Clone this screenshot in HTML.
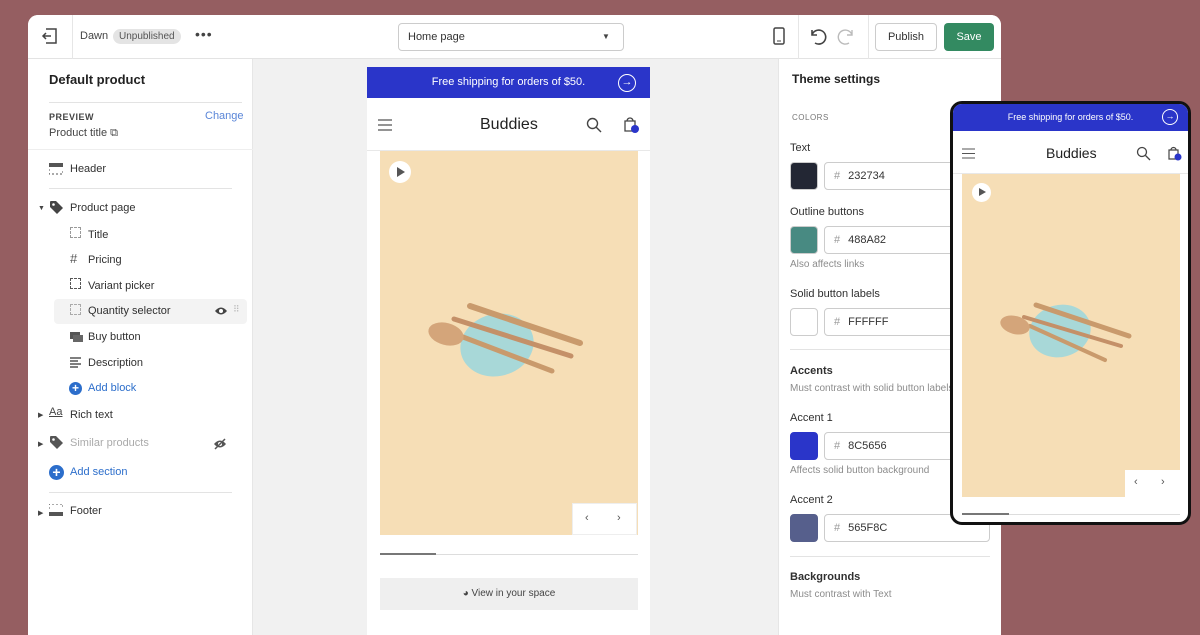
<!DOCTYPE html>
<html><head><meta charset="utf-8"><style>
*{box-sizing:border-box;margin:0;padding:0}
body{width:1200px;height:614px;background:#955e61;font-family:"Liberation Sans",sans-serif;position:relative;overflow:hidden;color:#202223}
.abs{position:absolute}
.app{left:28px;top:15px;width:973px;height:620px;background:#fff;border-radius:10px 10px 0 0;overflow:hidden}
.top{left:0;top:0;width:973px;height:44px;background:#fff;border-bottom:1px solid #e3e3e3;box-shadow:0 1px 3px rgba(0,0,0,.08)}
.t{position:absolute;font-size:11px;white-space:nowrap}
.sm{font-size:11px;color:#303030}
.mid{left:225px;top:44px;width:525px;height:580px;background:#f1f1f1}
.left{left:0;top:44px;width:225px;height:580px;background:#fff;border-right:1px solid #e6e6e6}
.right{left:750px;top:44px;width:223px;height:580px;background:#fff;border-left:1px solid #e6e6e6}
.sw{position:absolute;width:28px;height:28px;border-radius:4px;border:1px solid #ccc}
.inp{position:absolute;height:28px;border:1px solid #ccc;border-radius:4px;font-size:11px;padding:7px 0 0 9px;color:#333;width:180px}
.inp b{font-weight:normal;color:#999;margin-right:8px}
.grey{color:#8c8c8c}
.hr{position:absolute;height:1px;background:#e3e3e3}
</style></head><body>
<div class="abs app">
 <div class="abs top">
  <svg class="abs" style="left:13px;top:12px" width="18" height="18" viewBox="0 0 18 18" fill="none" stroke="#444" stroke-width="1.5"><path d="M5 2h10v14H5M2 9h8M5 6l-3 3 3 3"/></svg>
  <div class="abs" style="left:44px;top:0;width:1px;height:44px;background:#e6e6e6"></div>
  <div class="t" style="left:52px;top:15px;color:#444">Dawn</div>
  <div class="t" style="left:85px;top:14px;background:#e4e4e4;border-radius:8px;padding:2px 6px;font-size:10px;color:#555">Unpublished</div>
  <div class="t" style="left:167px;top:11px;font-size:14px;color:#444;letter-spacing:1px">•••</div>
  <div class="abs" style="left:370px;top:8px;width:226px;height:28px;border:1px solid #ccc;border-radius:4px"><span class="t" style="left:9px;top:7px;color:#333">Home page</span><span class="t" style="left:203px;top:8px;font-size:8px;color:#444">▼</span></div>
  <svg class="abs" style="left:745px;top:12px" width="12" height="18"><rect x="1" y="1" width="10" height="16" rx="1.5" fill="none" stroke="#444" stroke-width="1.5"/><line x1="4" y1="14" x2="8" y2="14" stroke="#444"/></svg>
  <div class="abs" style="left:770px;top:0;width:1px;height:44px;background:#e6e6e6"></div>
  <svg class="abs" style="left:780px;top:12px" width="20" height="18" fill="none" stroke="#444" stroke-width="1.6"><path d="M4 3v5h5M4 8a7 7 0 1 1 3 8"/></svg>
  <svg class="abs" style="left:808px;top:12px" width="20" height="18" fill="none" stroke="#bbb" stroke-width="1.4"><path d="M16 3v5h-5M16 8a7 7 0 1 0-3 8"/></svg>
  <div class="abs" style="left:840px;top:0;width:1px;height:44px;background:#e6e6e6"></div>
  <div class="abs" style="left:847px;top:8px;width:62px;height:28px;border:1px solid #ccc;border-radius:4px;font-size:11px;text-align:center;line-height:26px;color:#333">Publish</div>
  <div class="abs" style="left:916px;top:8px;width:50px;height:28px;background:#338a61;border-radius:4px;font-size:11px;text-align:center;line-height:28px;color:#fff">Save</div>
 </div>
 <div class="abs left">
  <div class="t" style="left:21px;top:13px;font-size:13px;font-weight:bold;color:#222">Default product</div>
  <div class="hr" style="left:21px;top:43px;width:193px"></div>
  <div class="t" style="left:21px;top:53px;font-size:9px;font-weight:bold;color:#444;letter-spacing:.5px">PREVIEW</div>
  <div class="t" style="left:177px;top:51px;color:#5a86d8">Change</div>
  <div class="t sm" style="left:21px;top:68px;color:#444">Product title ⧉</div>
  <div class="hr" style="left:0;top:90px;width:225px;background:#eee"></div>
  <svg class="abs" style="left:21px;top:104px" width="14" height="12"><rect x="0" y="0" width="14" height="4" fill="#555"/><path d="M0 6v5h14V6" fill="none" stroke="#555" stroke-dasharray="2 2"/></svg>
  <div class="t sm" style="left:42px;top:104px">Header</div>
  <div class="hr" style="left:21px;top:129px;width:183px"></div>
  <div class="t" style="left:10px;top:146px;font-size:7px;color:#444">▼</div>
  <svg class="abs" style="left:21px;top:141px" width="15" height="15"><path d="M1 7V2a1 1 0 0 1 1-1h5l7 7-6 6z" fill="#444"/><circle cx="4.5" cy="4.5" r="1.3" fill="#fff"/></svg>
  <div class="t sm" style="left:42px;top:143px">Product page</div>
  <div class="t sm" style="left:60px;top:170px">Title</div>
  <div class="t" style="left:42px;top:168px;width:11px;height:11px;border:1.5px dashed #999"></div>
  <div class="t" style="left:42px;top:192px;font-size:13px;color:#555">#</div>
  <div class="t sm" style="left:60px;top:195px">Pricing</div>
  <div class="t" style="left:42px;top:219px;width:11px;height:11px;border:1.5px dashed #555"></div>
  <div class="t sm" style="left:60px;top:221px">Variant picker</div>
  <div class="abs" style="left:26px;top:240px;width:193px;height:25px;background:#f3f3f3;border-radius:4px"></div>
  <div class="t" style="left:42px;top:245px;width:11px;height:11px;border:1.5px dashed #aaa"></div>
  <div class="t sm" style="left:60px;top:246px">Quantity selector</div>
  <svg class="abs" style="left:186px;top:247px" width="14" height="10"><path d="M1 5Q7-2 13 5Q7 12 1 5z" fill="#444"/><circle cx="7" cy="5" r="2" fill="#fff"/></svg>
  <div class="t" style="left:205px;top:245px;font-size:9px;color:#bbb">⠿</div>
  <svg class="abs" style="left:42px;top:273px" width="13" height="10"><rect x="0" y="0" width="10" height="7" fill="#555"/><rect x="3" y="3" width="10" height="7" fill="#666"/></svg>
  <div class="t sm" style="left:60px;top:272px">Buy button</div>
  <svg class="abs" style="left:42px;top:298px" width="11" height="11" stroke="#555" stroke-width="1.5"><path d="M0 1h11M0 4h8M0 7h11M0 10h8"/></svg>
  <div class="t sm" style="left:60px;top:298px">Description</div>
  <div class="abs" style="left:41px;top:323px;width:13px;height:13px;border-radius:50%;background:#2c6ecb;color:#fff;font-size:12px;line-height:13px;text-align:center;font-weight:bold">+</div>
  <div class="t sm" style="left:60px;top:323px;color:#2c6ecb">Add block</div>
  <div class="t" style="left:10px;top:352px;font-size:7px;color:#444">▶</div>
  <div class="t" style="left:21px;top:347px;font-size:11px;color:#444;text-decoration:underline">Aa</div>
  <div class="t sm" style="left:42px;top:350px">Rich text</div>
  <div class="t" style="left:10px;top:381px;font-size:7px;color:#444">▶</div>
  <svg class="abs" style="left:21px;top:376px" width="15" height="15"><path d="M1 7V2a1 1 0 0 1 1-1h5l7 7-6 6z" fill="#555"/><circle cx="4.5" cy="4.5" r="1.3" fill="#fff"/></svg>
  <div class="t sm" style="left:42px;top:378px;color:#aaa">Similar products</div>
  <svg class="abs" style="left:185px;top:379px" width="14" height="12"><path d="M1 6Q7-1 13 6Q7 13 1 6z" fill="#555"/><circle cx="7" cy="6" r="2" fill="#fff"/><line x1="2" y1="11" x2="12" y2="1" stroke="#555" stroke-width="1.5"/></svg>
  <div class="abs" style="left:21px;top:406px;width:15px;height:15px;border-radius:50%;background:#2c6ecb;color:#fff;font-size:14px;line-height:15px;text-align:center;font-weight:bold">+</div>
  <div class="t sm" style="left:42px;top:407px;color:#2c6ecb">Add section</div>
  <div class="hr" style="left:21px;top:433px;width:183px"></div>
  <div class="t" style="left:10px;top:450px;font-size:7px;color:#444">▶</div>
  <svg class="abs" style="left:21px;top:445px" width="14" height="12"><path d="M0 5V0h14v5" fill="none" stroke="#555" stroke-dasharray="2 2"/><rect x="0" y="8" width="14" height="4" fill="#555"/></svg>
  <div class="t sm" style="left:42px;top:446px">Footer</div>
 </div>
 <div class="abs mid">
  <div class="abs" style="left:114px;top:8px;width:283px;height:580px;background:#fff"></div>
  <div class="abs" style="left:114px;top:8px;width:283px;height:31px;background:#2a35c9;color:#fff;font-size:11px;text-align:center;line-height:31px">Free shipping for orders of $50.</div>
  <div class="abs" style="left:365px;top:15px;width:18px;height:18px;border:1.3px solid #fff;border-radius:50%;color:#fff;font-size:11px;line-height:15px;text-align:center">→</div>
  <svg class="abs" style="left:125px;top:60px" width="14" height="12" stroke="#555" stroke-width="1.2"><path d="M0 1h14M0 6h14M0 11h14"/></svg>
  <div class="t" style="left:227px;top:57px;font-size:16px;color:#222">Buddies</div>
  <svg class="abs" style="left:333px;top:58px" width="16" height="16" fill="none" stroke="#444" stroke-width="1.4"><circle cx="6.5" cy="6.5" r="5"/><path d="M10 10l5 5"/></svg>
  <svg class="abs" style="left:370px;top:56px" width="16" height="18" fill="none" stroke="#444" stroke-width="1.3"><path d="M2 6h10v10H2zM4 6a3 3 0 0 1 6 0"/><circle cx="12" cy="14" r="4" fill="#2a35c9" stroke="none"/></svg>
  <div class="abs" style="left:114px;top:91px;width:283px;height:1px;background:#e8e8e8"></div>
  <div class="abs" style="left:127px;top:92px;width:258px;height:384px;background:#f6deb6"></div>
  <svg class="abs" style="left:127px;top:92px" width="258" height="384">
   <ellipse cx="117" cy="194" rx="37" ry="31" fill="#a8d8d8" transform="rotate(-15 117 194)"/>
   <g stroke-linecap="round" fill="none">
    <path d="M90 155L200 192" stroke="#c99a6c" stroke-width="6"/>
    <path d="M74 168L191 205" stroke="#c49068" stroke-width="5"/>
    <path d="M83 186L172 220" stroke="#c99a6c" stroke-width="5"/>
   </g>
   <ellipse cx="66" cy="183" rx="18" ry="11" fill="#d4a57a" transform="rotate(15 66 183)"/>
  </svg>
  <div class="abs" style="left:136px;top:102px;width:22px;height:22px;border-radius:50%;background:#fff"></div>
  <div class="abs" style="left:144px;top:108px;border-left:8px solid #555;border-top:5px solid transparent;border-bottom:5px solid transparent"></div>
  <div class="abs" style="left:319px;top:444px;width:65px;height:32px;background:#fff;border:1px solid #eee;font-size:12px;color:#555"><span class="t" style="left:12px;top:8px">‹</span><span class="t" style="left:44px;top:8px">›</span></div>
  <div class="abs" style="left:127px;top:495px;width:258px;height:1px;background:#ddd"></div>
  <div class="abs" style="left:127px;top:494px;width:56px;height:2px;background:#777"></div>
  <div class="abs" style="left:127px;top:519px;width:258px;height:32px;background:#efefef;font-size:10px;color:#444;text-align:center;line-height:32px">◕ View in your space</div>
 </div>
 <div class="abs right">
  <div class="t" style="left:13px;top:13px;font-size:12px;font-weight:bold;color:#222">Theme settings</div>
  <div class="t" style="left:13px;top:54px;font-size:8px;color:#777;letter-spacing:.5px">COLORS</div>
  <div class="t sm" style="left:11px;top:83px">Text</div>
  <div class="sw" style="left:11px;top:103px;background:#232734"></div>
  <div class="inp" style="left:45px;top:103px"><b>#</b>232734</div>
  <div class="t sm" style="left:11px;top:147px">Outline buttons</div>
  <div class="sw" style="left:11px;top:167px;background:#488a82"></div>
  <div class="inp" style="left:45px;top:167px"><b>#</b>488A82</div>
  <div class="t sm grey" style="left:11px;top:200px;font-size:10px">Also affects links</div>
  <div class="t sm" style="left:11px;top:229px">Solid button labels</div>
  <div class="sw" style="left:11px;top:249px;background:#fff"></div>
  <div class="inp" style="left:45px;top:249px"><b>#</b>FFFFFF</div>
  <div class="hr" style="left:11px;top:290px;width:200px"></div>
  <div class="t sm" style="left:11px;top:306px;font-weight:bold">Accents</div>
  <div class="t sm grey" style="left:11px;top:324px;font-size:10px">Must contrast with solid button labels</div>
  <div class="t sm" style="left:11px;top:353px">Accent 1</div>
  <div class="sw" style="left:11px;top:373px;background:#2a35c9;border-color:#2a35c9"></div>
  <div class="inp" style="left:45px;top:373px"><b>#</b>8C5656</div>
  <div class="t sm grey" style="left:11px;top:406px;font-size:10px">Affects solid button background</div>
  <div class="t sm" style="left:11px;top:435px">Accent 2</div>
  <div class="sw" style="left:11px;top:455px;background:#565f8c;border-color:#565f8c"></div>
  <div class="inp" style="left:45px;top:455px;width:166px"><b>#</b>565F8C</div>
  <div class="hr" style="left:11px;top:497px;width:200px"></div>
  <div class="t sm" style="left:11px;top:512px;font-weight:bold">Backgrounds</div>
  <div class="t sm grey" style="left:11px;top:530px;font-size:10px">Must contrast with Text</div>
 </div>
</div>
<div class="abs" style="left:950px;top:101px;width:241px;height:424px;background:#fff;border:3px solid #111;border-radius:12px;overflow:hidden">
 <div class="abs" style="left:0;top:0;width:235px;height:27px;background:#2a35c9;color:#fff;font-size:9px;text-align:center;line-height:27px">Free shipping for orders of $50.</div>
 <div class="abs" style="left:209px;top:5px;width:16px;height:16px;border:1.2px solid #fff;border-radius:50%;color:#fff;font-size:9px;line-height:13px;text-align:center">→</div>
 <svg class="abs" style="left:9px;top:44px" width="13" height="11" stroke="#555" stroke-width="1.1"><path d="M0 1h13M0 5.5h13M0 10h13"/></svg>
 <div class="t" style="left:93px;top:41px;font-size:14px;color:#222">Buddies</div>
 <svg class="abs" style="left:183px;top:42px" width="15" height="15" fill="none" stroke="#444" stroke-width="1.3"><circle cx="6" cy="6" r="4.5"/><path d="M9.5 9.5l4.5 4.5"/></svg>
 <svg class="abs" style="left:214px;top:40px" width="16" height="18" fill="none" stroke="#444" stroke-width="1.2"><path d="M2 6h9v9H2zM4 6a2.5 2.5 0 0 1 5 0"/><circle cx="11" cy="13" r="3.5" fill="#2a35c9" stroke="none"/></svg>
 <div class="abs" style="left:0;top:69px;width:235px;height:1px;background:#e8e8e8"></div>
 <div class="abs" style="left:9px;top:70px;width:218px;height:323px;background:#f6deb6"></div>
 <svg class="abs" style="left:9px;top:70px" width="218" height="323">
  <ellipse cx="98" cy="157" rx="31" ry="26" fill="#a8d8d8" transform="rotate(-15 98 157)"/>
  <g stroke-linecap="round" fill="none">
   <path d="M74 131L167 162" stroke="#c99a6c" stroke-width="5"/>
   <path d="M62 143L159 172" stroke="#c49068" stroke-width="4"/>
   <path d="M68 152L143 186" stroke="#c99a6c" stroke-width="4"/>
  </g>
  <ellipse cx="53" cy="151" rx="15" ry="9" fill="#d4a57a" transform="rotate(15 53 151)"/>
 </svg>
 <div class="abs" style="left:19px;top:79px;width:19px;height:19px;border-radius:50%;background:#fff"></div>
 <div class="abs" style="left:26px;top:84px;border-left:7px solid #555;border-top:4.5px solid transparent;border-bottom:4.5px solid transparent"></div>
 <div class="abs" style="left:172px;top:366px;width:55px;height:27px;background:#fff;font-size:11px;color:#555"><span class="t" style="left:9px;top:6px">‹</span><span class="t" style="left:36px;top:6px">›</span></div>
 <div class="abs" style="left:9px;top:410px;width:218px;height:1px;background:#ddd"></div>
 <div class="abs" style="left:9px;top:409px;width:47px;height:2px;background:#777"></div>
</div>
</body></html>
